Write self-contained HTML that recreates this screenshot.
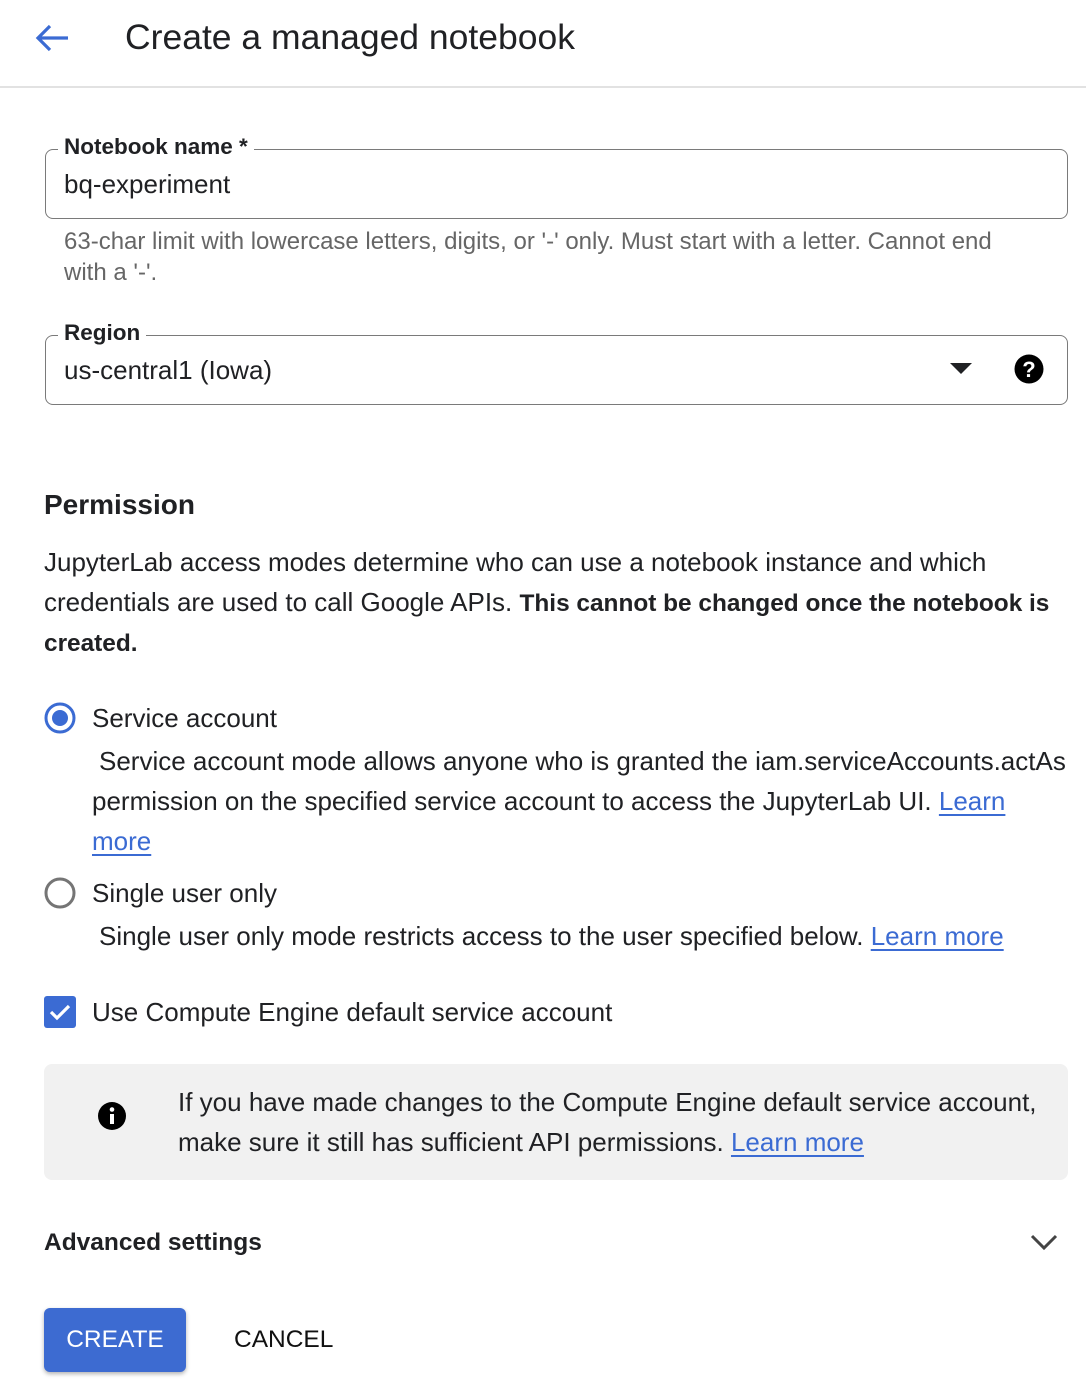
<!DOCTYPE html>
<html><head><meta charset="utf-8"><style>
*{margin:0;padding:0;box-sizing:border-box}
body{width:1086px;height:1388px;background:#fff;font-family:"Liberation Sans",Arial,sans-serif;color:#202124;position:relative;overflow:hidden}
.a{position:absolute;white-space:nowrap;line-height:1}
a{color:#3b6bd3;text-decoration:underline;text-underline-offset:4px;text-decoration-thickness:2px}
.box{position:absolute;border:1.5px solid #7a7a7a;border-radius:8px}
.lbl{position:absolute;background:#fff;padding:0 6px;font-size:22.5px;font-weight:bold;line-height:1}
.t{font-size:26px}
b{font-size:24.4px}
</style></head><body>
<svg class="a" style="left:34px;top:22px" width="36" height="32" viewBox="0 0 36 32"><path d="M34 16H4M16 4L4 16l12 12" fill="none" stroke="#3b6bd3" stroke-width="3.2"/></svg>
<div class="a" style="left:125px;top:20px;font-size:35.5px;color:#202124">Create a managed notebook</div>
<div class="a" style="left:0;top:86px;width:1086px;height:2px;background:#e2e2e2"></div>

<div class="box" style="left:45px;top:149px;width:1023px;height:70px"></div>
<div class="lbl" style="left:58px;top:136px">Notebook name *</div>
<div class="a t" style="left:64px;top:171px">bq-experiment</div>
<div class="a" style="left:64px;top:230px;font-size:24px;color:#666">63-char limit with lowercase letters, digits, or '-' only. Must start with a letter. Cannot end</div>
<div class="a" style="left:64px;top:261px;font-size:24px;color:#666">with a '-'.</div>

<div class="box" style="left:45px;top:335px;width:1023px;height:70px"></div>
<div class="lbl" style="left:58px;top:322px">Region</div>
<div class="a t" style="left:64px;top:357px">us-central1 (Iowa)</div>
<svg class="a" style="left:950px;top:363px" width="22" height="12"><path d="M0 0h22L11 11z" fill="#202124"/></svg>
<svg class="a" style="left:1014px;top:354px" width="30" height="30" viewBox="0 0 30 30"><circle cx="15" cy="15" r="14.5" fill="#000"/><text x="15" y="23" text-anchor="middle" font-family="Liberation Sans" font-weight="bold" font-size="22" fill="#fff">?</text></svg>

<div class="a" style="left:44px;top:491px;font-size:28px;font-weight:bold">Permission</div>
<div class="a t" style="left:44px;top:549px">JupyterLab access modes determine who can use a notebook instance and which</div>
<div class="a t" style="left:44px;top:589px">credentials are used to call Google APIs. <b>This cannot be changed once the notebook is</b></div>
<div class="a t" style="left:44px;top:629px"><b>created.</b></div>

<svg class="a" style="left:44px;top:702px" width="32" height="32"><circle cx="16" cy="16" r="14" fill="none" stroke="#3b6bd3" stroke-width="3"/><circle cx="16" cy="16" r="8" fill="#3b6bd3"/></svg>
<div class="a t" style="left:92px;top:705px">Service account</div>
<div class="a t" style="left:99px;top:748px">Service account mode allows anyone who is granted the iam.serviceAccounts.actAs</div>
<div class="a t" style="left:92px;top:788px">permission on the specified service account to access the JupyterLab UI. <a>Learn</a></div>
<div class="a t" style="left:92px;top:828px"><a>more</a></div>

<svg class="a" style="left:44px;top:877px" width="32" height="32"><circle cx="16" cy="16" r="14" fill="none" stroke="#757575" stroke-width="3"/></svg>
<div class="a t" style="left:92px;top:880px">Single user only</div>
<div class="a t" style="left:99px;top:923px">Single user only mode restricts access to the user specified below. <a>Learn more</a></div>

<svg class="a" style="left:44px;top:996px" width="32" height="32"><rect width="32" height="32" rx="3" fill="#3b6bd3"/><path d="M7 16l6 6 12-12" fill="none" stroke="#fff" stroke-width="3.2"/></svg>
<div class="a t" style="left:92px;top:999px">Use Compute Engine default service account</div>

<div class="a" style="left:44px;top:1064px;width:1024px;height:116px;background:#f1f1f1;border-radius:8px"></div>
<svg class="a" style="left:98px;top:1102px" width="28" height="28" viewBox="0 0 28 28"><circle cx="14" cy="14" r="14" fill="#000"/><rect x="12" y="12" width="4" height="10" fill="#fff"/><circle cx="14" cy="7.5" r="2.3" fill="#fff"/></svg>
<div class="a t" style="left:178px;top:1089px">If you have made changes to the Compute Engine default service account,</div>
<div class="a t" style="left:178px;top:1129px">make sure it still has sufficient API permissions. <a>Learn more</a></div>

<div class="a" style="left:44px;top:1231px;font-size:24.5px;font-weight:bold">Advanced settings</div>
<svg class="a" style="left:1030px;top:1234px" width="28" height="18"><path d="M2 2l12 12L26 2" fill="none" stroke="#444" stroke-width="3"/></svg>

<div class="a" style="left:44px;top:1308px;width:142px;height:64px;background:#3d6bd1;border-radius:6px;box-shadow:0 2px 4px rgba(0,0,0,.3)"></div>
<div class="a" style="left:44px;top:1328px;width:142px;text-align:center;font-size:24.5px;color:#fff">CREATE</div>
<div class="a" style="left:234px;top:1328px;font-size:24.5px;color:#111">CANCEL</div>
</body></html>
